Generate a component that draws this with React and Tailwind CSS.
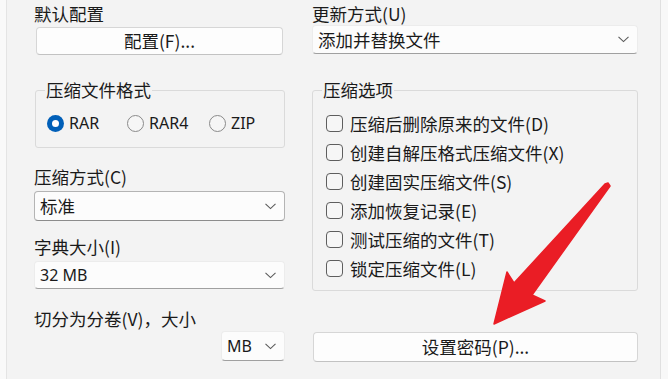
import React from "react";

const cjk = "font-['Microsoft_YaHei','Noto_Sans_CJK_SC',sans-serif]";
const latin = "font-['Noto_Sans','Noto_Sans_CJK_SC',sans-serif]";

function Chevron() {
  return (
    <svg width="11" height="7" viewBox="0 0 11 7" className="shrink-0">
      <polyline points="0.5,0.8 5.5,5.6 10.5,0.8" fill="none" stroke="#5a5a5a" strokeWidth="1.1" />
    </svg>
  );
}

function Select({ children, className = "", focused = false }) {
  return (
    <div
      className={
        "flex items-center justify-between rounded-[4px] bg-[#fcfcfc] pl-[5px] pr-[8px] border " +
        (focused ? "border-[#b4b4b4] border-b-[#8c8c8c] " : "border-[#ececec] border-b-[#a0a0a0] ") +
        className
      }
    >
      <span className="whitespace-nowrap">{children}</span>
      <Chevron />
    </div>
  );
}

function Button({ children, className = "" }) {
  return (
    <div
      className={
        "flex items-center justify-center rounded-[4px] border border-[#d6d6d6] border-b-[#c2c2c2] bg-[#fdfdfd] " +
        className
      }
    >
      {children}
    </div>
  );
}

function Radio({ label, checked, width }) {
  return (
    <div className="flex items-center gap-[5px]" style={{ width }}>
      {checked ? (
        <span className="flex h-[17px] w-[17px] items-center justify-center rounded-full bg-[#005fb8]">
          <span className="h-[7px] w-[7px] rounded-full bg-white" />
        </span>
      ) : (
        <span className="h-[17px] w-[17px] rounded-full border border-[#8a8a8a] bg-[#f6f6f6]" />
      )}
      <span className={latin + " text-[16px] text-[#1a1a1a]"}>{label}</span>
    </div>
  );
}

function Check({ label }) {
  return (
    <div className="flex h-[29px] items-center gap-[7px] pl-[4px]">
      <span className="h-[17px] w-[17px] rounded-[4px] border border-[#5e5e5e] bg-[#f6f6f6]" />
      <span>{label}</span>
    </div>
  );
}

export default function App() {
  const options = [
    "压缩后删除原来的文件(D)",
    "创建自解压格式压缩文件(X)",
    "创建固实压缩文件(S)",
    "添加恢复记录(E)",
    "测试压缩的文件(T)",
    "锁定压缩文件(L)",
  ];

  return (
    <div className={cjk + " relative flex h-[379px] w-[668px] overflow-hidden bg-[#f3f3f3] text-[17.5px] leading-[20px] text-[#1a1a1a]"}>
      <div className="w-[7px] shrink-0 border-r border-[#e4e4e4] bg-[#f9f9f9]" />

      <div className="flex gap-[27px] pl-[27px]">
        {/* left column */}
        <div className="flex w-[251px] flex-col">
          <div className="mt-[4px] h-[20px]">默认配置</div>
          <Button className="mt-[3px] ml-[2px] h-[28px] w-[247px]">配置(F)...</Button>

          <fieldset className="mt-[25px] ml-[1px] rounded-[3px] border border-[#dadada] pl-[9px] pb-[14px]">
            <legend className="px-[1px] leading-[20px]">压缩文件格式</legend>
            <div className="mt-[13px] flex h-[20px] items-center pl-[2px]">
              <Radio label="RAR" checked width={80} />
              <Radio label="RAR4" width={82} />
              <Radio label="ZIP" width={60} />
            </div>
          </fieldset>

          <div className="mt-[19px] h-[20px]">压缩方式(C)</div>
          <Select focused className="mt-[4px] h-[30px]">标准</Select>

          <div className="mt-[16px] h-[20px]">字典大小(I)</div>
          <Select className={latin + " mt-[4px] h-[28px] text-[16px]"}>32 MB</Select>

          <div className="mt-[20px] h-[20px]">切分为分卷(V)，大小</div>
          <Select className={latin + " mt-[2px] h-[30px] w-[64px] self-end text-[16px]"}>MB</Select>
        </div>

        {/* right column */}
        <div className="flex w-[326px] flex-col">
          <div className="mt-[4px] h-[20px]">更新方式(U)</div>
          <Select className="mt-[1px] h-[29px]">添加并替换文件</Select>

          <fieldset className="mt-[26px] rounded-[3px] border border-[#dadada] pl-[9px] pb-[7px]">
            <legend className="px-[1px] leading-[20px]">压缩选项</legend>
            <div className="mt-[9px] flex flex-col">
              {options.map((o) => (
                <Check key={o} label={o} />
              ))}
            </div>
          </fieldset>

          <Button className="mt-[41px] ml-[1px] h-[30px]">设置密码(P)...</Button>
        </div>
      </div>

      <div className="ml-auto w-[8px] shrink-0 border-l border-[#e0e0e0] bg-[#f8f8f8]" />

      <svg className="absolute left-0 top-0 pointer-events-none" width="668" height="379" viewBox="0 0 668 379">
        <polygon
          points="494,324 507,272 514,283 605,184 608,183 610,186 532,295 545,301"
          fill="#ea1d25"
          stroke="#ea1d25"
          strokeWidth="1.5"
          strokeLinejoin="round"
        />
      </svg>
    </div>
  );
}
